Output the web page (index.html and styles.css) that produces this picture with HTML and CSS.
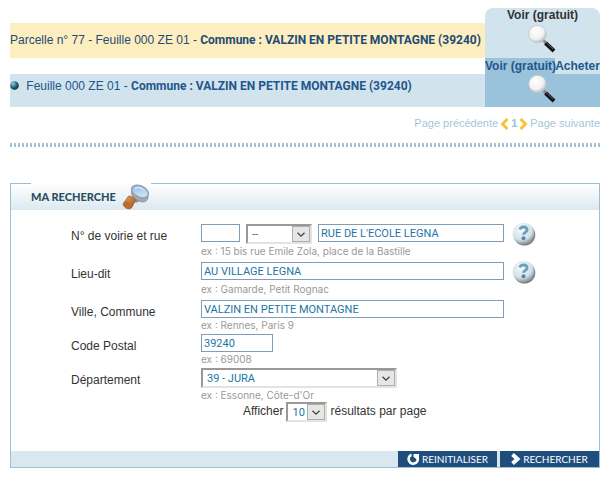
FILE: index.html
```html
<!DOCTYPE html>
<html lang="fr">
<head>
    <meta charset="UTF-8">
    <meta name="viewport" content="width=device-width, initial-scale=1.0">
    <title>Recherche</title>
    <link rel="stylesheet" href="styles.css">
</head>
<body>
    <svg class="defs" width="0" height="0" aria-hidden="true">
        <defs>
            <radialGradient id="lens" cx="0.4" cy="0.35" r="0.65">
                <stop offset="0" stop-color="#ffffff"/>
                <stop offset="0.7" stop-color="#f1f1f1"/>
                <stop offset="1" stop-color="#b9bcbe"/>
            </radialGradient>
            <radialGradient id="ball" cx="0.4" cy="0.3" r="0.7">
                <stop offset="0" stop-color="#f4fafd"/>
                <stop offset="0.7" stop-color="#d3e1e8"/>
                <stop offset="1" stop-color="#87959c"/>
            </radialGradient>
            <radialGradient id="bead" cx="0.35" cy="0.3" r="0.7">
                <stop offset="0" stop-color="#9fd3e4"/>
                <stop offset="0.5" stop-color="#2f7490"/>
                <stop offset="1" stop-color="#0d2f45"/>
            </radialGradient>
            <linearGradient id="glass" x1="0" y1="0" x2="1" y2="1">
                <stop offset="0" stop-color="#7fb2ef"/>
                <stop offset="1" stop-color="#e6f3ff"/>
            </linearGradient>
            <linearGradient id="wood" x1="0" y1="0" x2="1" y2="1">
                <stop offset="0" stop-color="#e8a462"/>
                <stop offset="1" stop-color="#96501c"/>
            </linearGradient>
            <symbol id="magnifier" viewBox="0 0 28 28">
                <path d="M15 15l4 4" stroke="#888" stroke-width="2.500"/>
                <path d="M17.500 18l8.500 8" stroke="#111" stroke-width="4"/>
                <path d="M18 17.500l7 6.500" stroke="#777" stroke-width="0.800"/>
                <circle cx="9.500" cy="9" r="8.700" fill="url(#lens)" stroke="#c3c6c8" stroke-width="0.800"/>
            </symbol>
            <symbol id="help" viewBox="0 0 24 24">
                <circle cx="12.500" cy="12.800" r="10.800" fill="#555" opacity="0.75"/>
                <circle cx="11.500" cy="11.500" r="10.800" fill="url(#ball)"/>
                <path d="M7.800 7.500c1-3.500 7.700-3.300 7.300 0.500c-0.200 2.300-3.600 2.400-3.600 4.800" fill="none" stroke="#6a9fbb" stroke-width="2.800"/>
                <circle cx="11.500" cy="16.200" r="2" fill="#5288a6"/>
            </symbol>
        </defs>
    </svg>

    <main>
        <table class="results">
            <colgroup>
                <col>
                <col class="col-view">
                <col class="col-buy">
            </colgroup>
            <tbody>
                <tr class="head">
                    <td></td>
                    <th colspan="2" class="rounded">Voir (gratuit)</th>
                </tr>
                <tr class="parcel">
                    <td class="name">Parcelle n° 77 - Feuille 000 ZE 01 - <strong>Commune : VALZIN EN PETITE MONTAGNE (39240)</strong></td>
                    <td colspan="2" class="view"><a href="#" aria-label="Voir la parcelle"><svg width="28" height="28"><use href="#magnifier"/></svg></a></td>
                </tr>
                <tr class="head sub">
                    <td></td>
                    <th class="free">Voir (gratuit)</th>
                    <th class="buy">Acheter</th>
                </tr>
                <tr class="sheet">
                    <td class="name">
                        <svg class="bead" width="9" height="9" viewBox="0 0 9 9"><circle cx="4.500" cy="4.500" r="4.300" fill="url(#bead)"/></svg>
                        Feuille 000 ZE 01 - <strong>Commune : VALZIN EN PETITE MONTAGNE (39240)</strong>
                    </td>
                    <td colspan="2" class="view"><a href="#" aria-label="Voir la feuille"><svg width="28" height="28"><use href="#magnifier"/></svg></a></td>
                </tr>
            </tbody>
        </table>

        <nav class="pager">
            <a href="#">Page précédente</a>
            <svg width="9" height="12" viewBox="0 0 9 12"><path d="M7.500 1L2.500 6l5 5" fill="none" stroke="#f8c335" stroke-width="3"/></svg>
            <strong>1</strong>
            <svg width="9" height="12" viewBox="0 0 9 12"><path d="M1.500 1l5 5l-5 5" fill="none" stroke="#f8c335" stroke-width="3"/></svg>
            <a href="#">Page suivante</a>
        </nav>

        <div class="separator"></div>

        <form class="search">
            <div class="search-head">
                <h2>
                    MA RECHERCHE
                    <svg width="28" height="26" viewBox="0 0 28 26">
                        <path d="M11 14l4-3l4 5l-5 3z" fill="#8d9299"/>
                        <path d="M9.500 5v4.500c1 4 6 8 11 8.500c3 0 5-1.500 5.500-4V9z" fill="#a4aab2" stroke="#747b84" stroke-width="0.600"/>
                        <ellipse cx="18" cy="7.500" rx="9" ry="5.500" transform="rotate(25 18 7.500)" fill="url(#glass)" stroke="#9aa1aa" stroke-width="1.500"/>
                        <path d="M13 4.500c3-2 7-0.500 9 2" fill="none" stroke="#fff" stroke-width="1"/>
                        <path d="M6 12.500c3-1.500 7 1 7.500 4.500l-4 7c-3 2.500-8-0.500-8.500-4z" fill="url(#wood)" stroke="#875027" stroke-width="0.500"/>
                        <ellipse cx="5" cy="21" rx="4.200" ry="3" transform="rotate(35 5 21)" fill="#b96d30"/>
                    </svg>
                </h2>
            </div>

            <div class="fields">
                <div class="row tall">
                    <label for="street">N° de voirie et rue</label>
                    <div class="field">
                        <div class="line">
                            <input type="text" id="number" class="number" aria-label="N° de voirie">
                            <span class="select kind">
                                <select aria-label="Indice de répétition"><option>--</option><option>bis</option><option>ter</option></select>
                                <svg width="18" height="16" viewBox="0 0 18 16"><path d="M5 6.500l4 4l4-4" fill="none" stroke="#444" stroke-width="1.500"/></svg>
                            </span>
                            <input type="text" id="street" class="street" value="RUE DE L'ECOLE LEGNA">
                        </div>
                        <span class="hint">ex : 15 bis rue Emile Zola, place de la Bastille</span>
                    </div>
                    <button type="button" class="help" aria-label="Aide voirie"><svg width="24" height="24"><use href="#help"/></svg></button>
                </div>
                <div class="row tall">
                    <label for="place">Lieu-dit</label>
                    <div class="field">
                        <div class="line"><input type="text" id="place" class="street" value="AU VILLAGE LEGNA"></div>
                        <span class="hint">ex : Gamarde, Petit Rognac</span>
                    </div>
                    <button type="button" class="help" aria-label="Aide lieu-dit"><svg width="24" height="24"><use href="#help"/></svg></button>
                </div>
                <div class="row">
                    <label for="city">Ville, Commune</label>
                    <div class="field">
                        <div class="line"><input type="text" id="city" class="street" value="VALZIN EN PETITE MONTAGNE"></div>
                        <span class="hint">ex : Rennes, Paris 9</span>
                    </div>
                </div>
                <div class="row">
                    <label for="zip">Code Postal</label>
                    <div class="field">
                        <div class="line"><input type="text" id="zip" class="zip" value="39240"></div>
                        <span class="hint">ex : 69008</span>
                    </div>
                </div>
                <div class="row">
                    <label for="dept">Département</label>
                    <div class="field">
                        <div class="line">
                            <span class="select dept">
                                <select id="dept"><option>39 - JURA</option></select>
                                <svg width="18" height="16" viewBox="0 0 18 16"><path d="M5 6.500l4 4l4-4" fill="none" stroke="#444" stroke-width="1.500"/></svg>
                            </span>
                        </div>
                        <span class="hint">ex : Essonne, Côte-d'Or</span>
                    </div>
                </div>
                <div class="per-page">
                    <label for="count">Afficher</label>
                    <span class="select count">
                        <select id="count"><option>10</option><option>20</option><option>50</option></select>
                        <svg width="18" height="16" viewBox="0 0 18 16"><path d="M5 6.500l4 4l4-4" fill="none" stroke="#444" stroke-width="1.500"/></svg>
                    </span>
                    <span>résultats par page</span>
                </div>
            </div>

            <div class="actions">
                <button type="reset">
                    <svg width="13" height="13" viewBox="0 0 13 13"><path d="M4.500 1.800A4.600 4.600 0 1 0 10.800 5.500" fill="none" stroke="#fff" stroke-width="2.600"/><path d="M6.500 1h5.500v5.500h-2.500l-3-3z" fill="#fff"/></svg>
                    REINITIALISER
                </button>
                <button type="submit">
                    <svg width="10" height="12" viewBox="0 0 10 12"><path d="M1.500 1.500L6.500 6l-5 4.500" fill="none" stroke="#fff" stroke-width="4"/></svg>
                    RECHERCHER
                </button>
            </div>
        </form>
    </main>
</body>
</html>
```
FILE: styles.css
```css
* {
    box-sizing: border-box;
}

body {
    margin: 0;
    padding: 8px 6px 10px 10px;
    background-color: #fff;
    color: #333;
    font-family: "Liberation Sans", Arial, sans-serif;
    font-size: 12px;
    line-height: 15px;
}

svg {
    display: block;
    flex: none;
}

.defs {
    position: absolute;
}

/* Results */
.results {
    width: 100%;
    table-layout: fixed;
    border-collapse: collapse;
    color: #234a78;
}

.results td,
.results th {
    padding: 0;
    white-space: nowrap;
}

.results strong {
    font-family: Roboto, Arial, sans-serif;
}

.col-view {
    width: 70px;
}

.col-buy {
    width: 45px;
}

.head th {
    height: 15px;
    background-color: #d1e3ed;
    color: #333;
}

.head .rounded {
    border-radius: 8px 8px 0 0;
}

.sub th {
    height: 16px;
    color: #23568c;
}

.sub .free {
    background-color: #9ac2da;
}

.parcel td {
    height: 35px;
    background-color: #fdeebf;
}

.parcel .view {
    background-color: #d1e3ed;
}

.sheet td {
    height: 33px;
    background-color: #d1e3ed;
    color: #23568c;
}

.sheet .view {
    background-color: #9ac2da;
}

.sheet .name {
    padding-bottom: 8px;
}

.results .view {
    padding-bottom: 3px;
}

.view svg {
    margin: 0 auto;
}

.bead {
    display: inline-block;
    margin-right: 4px;
}

/* Pager */
.pager {
    display: flex;
    justify-content: flex-end;
    align-items: center;
    gap: 2px;
    margin-top: 9px;
    color: #9ac2da;
    font-size: 11px;
}

.pager a {
    color: #a5c6d9;
    text-decoration: none;
}

.separator {
    height: 4px;
    margin: 12px 0 36px;
    background: repeating-linear-gradient(to right, #9fc2d5 0 2px, #fff 2px 4px);
}

/* Search form */
.search {
    border: 1px solid #9cbfd1;
}

.search-head {
    display: flex;
    height: 26px;
    padding-left: 20px;
    background: linear-gradient(#fff, #dbe9f0);
}

.search-head h2 {
    display: flex;
    align-items: center;
    gap: 6px;
    width: 120px;
    height: 27px;
    margin: -1px 0 0;
    background: linear-gradient(#fff, #dbe9f0);
    color: #2b4f60;
    font-family: Lato, sans-serif;
    font-size: 11px;
    font-weight: 900;
    white-space: nowrap;
}

.fields {
    padding: 14px 60px 0;
}

.row {
    display: flex;
    min-height: 34px;
}

.row.tall {
    min-height: 38px;
}

.row > label {
    width: 130px;
    padding-top: 5px;
}

.field {
    width: 303px;
}

.line {
    display: flex;
    gap: 6px;
    min-height: 18px;
}

.tall .line {
    min-height: 20px;
}

.hint {
    display: block;
    color: #999;
    font-family: Inter, Arial, sans-serif;
    font-size: 10px;
    line-height: 14px;
}

input,
select {
    color: #1a76a8;
    font-family: Roboto, Arial, sans-serif;
    font-size: 11px;
}

input {
    height: 18px;
    padding: 0 2px;
    border: 1px solid #7f9db9;
    background-color: #fff;
}

.number {
    width: 39px;
}

.street {
    flex: 1;
    min-width: 0;
}

.zip {
    width: 72px;
}

.select {
    position: relative;
    display: block;
    height: 20px;
}

.select select {
    width: 100%;
    height: 20px;
    padding: 0 20px 0 4px;
    border: 2px solid;
    border-color: #999 #e3e3e3 #e3e3e3 #999;
    border-radius: 0;
    background-color: #fff;
    appearance: none;
}

/* Arrow drawn over the right end of the select */
.select svg {
    position: absolute;
    top: 2px;
    right: 2px;
    border: 1px solid #adadad;
    background-color: #e6e6e6;
    pointer-events: none;
}

.kind {
    width: 66px;
}

.dept {
    width: 196px;
}

.count {
    width: 41px;
}

.help {
    width: 24px;
    height: 24px;
    margin: -2px 0 0 8px;
    padding: 0;
    border: none;
    background: none;
    cursor: pointer;
}

.per-page {
    display: flex;
    gap: 3px;
    padding-left: 172px;
    line-height: 18px;
}

.actions {
    display: flex;
    justify-content: flex-end;
    gap: 3px;
    margin-top: 29px;
    background-color: #d9e8ef;
}

.actions button {
    display: flex;
    align-items: center;
    justify-content: center;
    gap: 2px;
    width: 99px;
    height: 16px;
    padding: 0;
    border: none;
    background-color: #1f4e7e;
    color: #fff;
    font-family: Lato, sans-serif;
    font-size: 10px;
    line-height: 16px;
    cursor: pointer;
}
```
